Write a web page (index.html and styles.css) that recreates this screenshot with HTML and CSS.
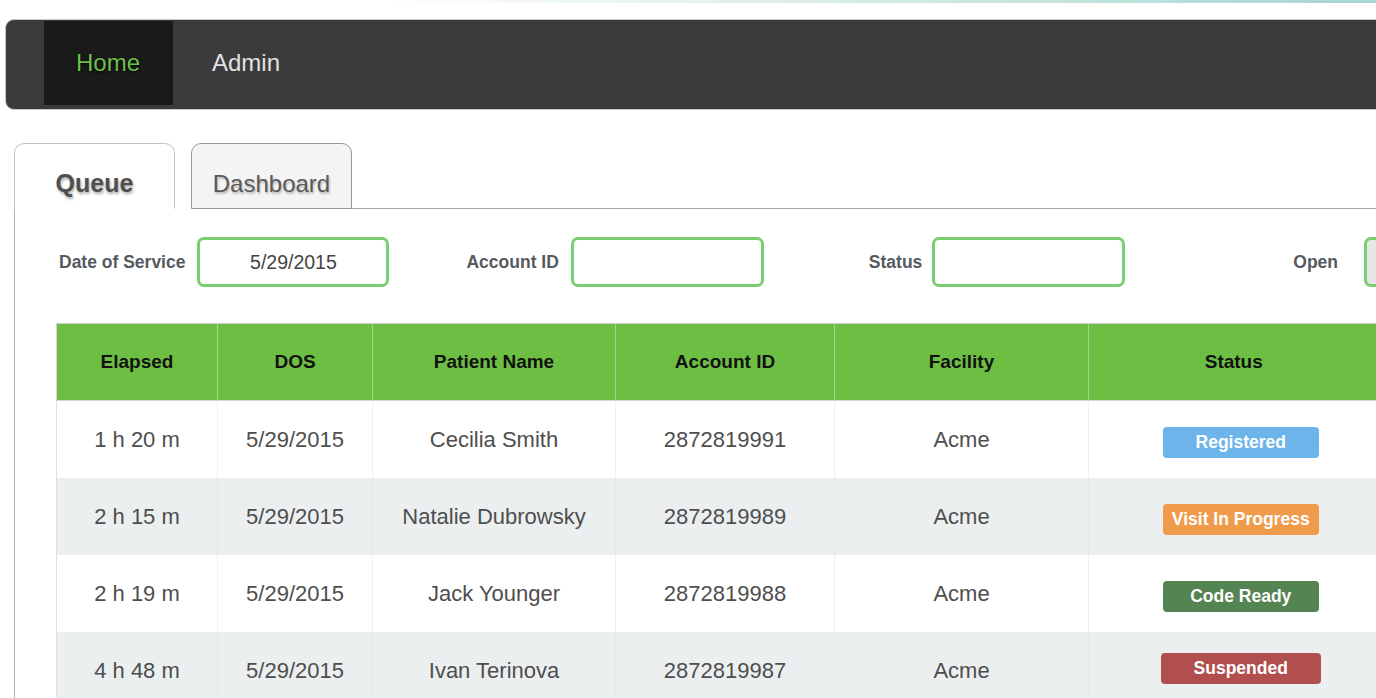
FILE: index.html
```html
<!DOCTYPE html>
<html lang="en">
<head>
<meta charset="utf-8">
<title>Queue</title>
<link rel="stylesheet" href="styles.css">
</head>
<body>
<div class="topstrip"></div>
<nav class="navbar">
  <a class="nav-item active">Home</a>
  <a class="nav-item admin">Admin</a>
</nav>
<main class="content">
  <div class="tabs">
    <div class="tab active">Queue</div>
    <div class="tab">Dashboard</div>
    <div class="tab-fill"></div>
  </div>
  <section class="panel">
    <div class="filters">
      <label class="flabel">Date of Service</label>
      <div class="finput date">5/29/2015</div>
      <label class="flabel acct">Account ID</label>
      <div class="finput"></div>
      <label class="flabel status">Status</label>
      <div class="finput"></div>
      <label class="flabel open">Open</label>
      <div class="finput grey"></div>
    </div>
    <table class="queue">
      <colgroup>
        <col class="c1"><col class="c2"><col class="c3"><col class="c4"><col class="c5"><col class="c6">
      </colgroup>
      <thead>
        <tr><th>Elapsed</th><th>DOS</th><th>Patient Name</th><th>Account ID</th><th>Facility</th><th>Status</th></tr>
      </thead>
      <tbody>
        <tr><td>1 h 20 m</td><td>5/29/2015</td><td>Cecilia Smith</td><td>2872819991</td><td>Acme</td><td><span class="badge registered">Registered</span></td></tr>
        <tr class="alt"><td>2 h 15 m</td><td>5/29/2015</td><td>Natalie Dubrowsky</td><td>2872819989</td><td>Acme</td><td><span class="badge progress">Visit In Progress</span></td></tr>
        <tr><td>2 h 19 m</td><td>5/29/2015</td><td>Jack Younger</td><td>2872819988</td><td>Acme</td><td><span class="badge ready">Code Ready</span></td></tr>
        <tr class="alt"><td>4 h 48 m</td><td>5/29/2015</td><td>Ivan Terinova</td><td>2872819987</td><td>Acme</td><td><span class="badge suspended">Suspended</span></td></tr>
      </tbody>
    </table>
  </section>
</main>
</body>
</html>
```

FILE: styles.css
```css
html, body {
  margin: 0;
  padding: 0;
  background: #ffffff;
}
body {
  width: 1376px;
  height: 698px;
  overflow: hidden;
  font-family: "Liberation Sans", Arial, Helvetica, sans-serif;
  color: #505050;
}

.topstrip {
  height: 3px;
  background: linear-gradient(to right, #ffffff 0, #ffffff 380px, #d2e9e6 900px, #a7d6cf 100%);
}

.navbar {
  display: flex;
  align-items: flex-start;
  margin: 16px 0 0 5px;
  width: 1400px;
  height: 89px;
  background: #3b3b3d;
  border: 1px solid #c9c9c9;
  border-radius: 9px 0 0 9px;
  box-sizing: content-box;
}
.nav-item {
  display: flex;
  align-items: center;
  height: 84px;
  margin-top: 1px;
  padding: 0 32px;
  font-size: 24px;
  color: #e2e2e2;
  text-decoration: none;
}
.nav-item.active {
  margin-left: 38px;
  width: 65px;
  background: #1a1a1a;
  color: #6cc04a;
  text-shadow: 0 1px 3px #000000;
}
.nav-item.admin {
  padding-left: 39px;
}

.content {
  padding-left: 14px;
  margin-top: 33px;
}

.tabs {
  display: flex;
  align-items: flex-end;
  height: 66px;
}
.tab {
  box-sizing: border-box;
  width: 161px;
  height: 66px;
  padding-top: 25px;
  text-align: center;
  font-size: 24px;
  line-height: 29px;
  color: #5a5a5a;
  background: #f4f4f4;
  border: 1px solid #9a9a9a;
  border-radius: 10px 10px 0 0;
  text-shadow: 1px 2px 2px #b8b8b8;
  margin-right: 16px;
}
.tab.active {
  background: #ffffff;
  border-color: #c4c4c4;
  border-bottom: 1px solid #ffffff;
  font-weight: bold;
  font-size: 25px;
  color: #4f4f4f;
  text-shadow: 1px 2px 3px #a8a8a8;
}
.tab-fill {
  flex: 1;
  margin-left: -16px;
  border-bottom: 1px solid #a8a8a8;
}

.panel {
  border-left: 1px solid #b4b4b4;
  padding: 28px 0 0 41px;
  height: 500px;
}

.filters {
  display: flex;
  align-items: center;
  padding-left: 3px;
  height: 50px;
}
.flabel {
  flex-shrink: 0;
  white-space: nowrap;
  font-size: 17.5px;
  font-weight: bold;
  color: #555a5f;
  margin-right: 12px;
}
.flabel.acct { margin-left: 77px; }
.flabel.status { margin-left: 105px; margin-right: 10px; }
.flabel.open { margin-left: 168px; margin-right: 26px; }
.finput {
  flex-shrink: 0;
  box-sizing: border-box;
  width: 193px;
  height: 50px;
  border: 3px solid #7acd70;
  border-radius: 7px;
  background: #ffffff;
  display: flex;
  align-items: center;
  justify-content: center;
  font-size: 19.5px;
  color: #444444;
}
.finput.date { width: 192px; }
.finput.grey {
  width: 60px;
  background: #e6e6e6;
}

.queue {
  margin-top: 36px;
  width: 1322px;
  table-layout: fixed;
  border-collapse: collapse;
}
.c1 { width: 161px; }
.c2 { width: 155px; }
.c3 { width: 243px; }
.c4 { width: 219px; }
.c5 { width: 254px; }
.c6 { width: 290px; }

.queue th {
  height: 76px;
  padding: 0;
  background: #6dbf44;
  color: #111111;
  font-size: 19px;
  font-weight: bold;
  text-align: center;
  border-top: 1px solid #cfcfcf;
  border-left: 1px solid #a9d494;
  border-bottom: 1px solid #d6d6d6;
}
.queue th:first-child {
  border-left: 1px solid #d6d6d6;
}
.queue td {
  height: 77px;
  padding: 0;
  text-align: center;
  font-size: 22px;
  color: #4e4e4e;
  border-left: 1px solid #eef0f1;
}
.queue td:first-child {
  border-left: 1px solid #e0e0e0;
}
.queue tr.alt td {
  background: #eceff0;
  border-left-color: #e6e9ea;
}
.queue tr.alt td:first-child {
  border-left-color: #e0e0e0;
}

.badge {
  display: inline-block;
  box-sizing: border-box;
  width: 156px;
  height: 31px;
  line-height: 31px;
  margin-top: 6px;
  margin-left: 14px;
  border-radius: 4px;
  font-size: 17.5px;
  font-weight: bold;
  color: #ffffff;
  white-space: nowrap;
}
.badge.registered { background: #6db4ea; }
.badge.progress { background: #f09b4b; }
.badge.ready { background: #548451; }
.badge.suspended {
  background: #b04f4e;
  width: 160px;
  margin-top: 0;
  margin-bottom: 4px;
}
```
